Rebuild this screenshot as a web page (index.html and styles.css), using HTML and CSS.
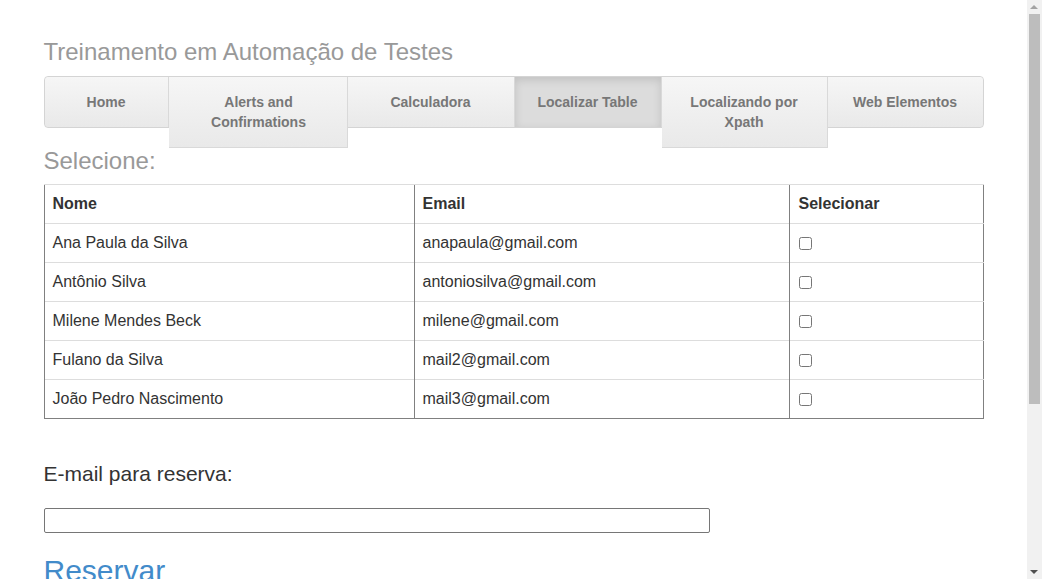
FILE: index.html
```html
<!DOCTYPE html>
<html lang="pt-BR">
<head>
<meta charset="utf-8">
<title>Treinamento em Automação de Testes</title>
<link rel="stylesheet" href="styles.css">
</head>
<body>
<div class="container">
  <h1 class="title">Treinamento em Automação de Testes</h1>
  <ul class="nav">
    <li class="nav-item w1">Home</li>
    <li class="nav-item w2">Alerts and Confirmations</li>
    <li class="nav-item w3">Calculadora</li>
    <li class="nav-item w4 active">Localizar Table</li>
    <li class="nav-item w5">Localizando por Xpath</li>
    <li class="nav-item w6 last">Web Elementos</li>
  </ul>
  <h2 class="subtitle">Selecione:</h2>
  <table class="grid">
    <colgroup>
      <col class="c1"><col class="c2"><col class="c3">
    </colgroup>
    <thead>
      <tr><th>Nome</th><th>Email</th><th>Selecionar</th></tr>
    </thead>
    <tbody>
      <tr><td>Ana Paula da Silva</td><td>anapaula@gmail.com</td><td><input type="checkbox" class="chk"></td></tr>
      <tr><td>Antônio Silva</td><td>antoniosilva@gmail.com</td><td><input type="checkbox" class="chk"></td></tr>
      <tr><td>Milene Mendes Beck</td><td>milene@gmail.com</td><td><input type="checkbox" class="chk"></td></tr>
      <tr><td>Fulano da Silva</td><td>mail2@gmail.com</td><td><input type="checkbox" class="chk"></td></tr>
      <tr><td>João Pedro Nascimento</td><td>mail3@gmail.com</td><td><input type="checkbox" class="chk"></td></tr>
    </tbody>
  </table>
  <p class="label">E-mail para reserva:</p>
  <input type="text" class="email">
  <a class="reservar" href="#">Reservar</a>
</div>
<div class="scrollbar" aria-hidden="true">
  <span class="arrow up"></span>
  <span class="thumb"></span>
  <span class="arrow down"></span>
</div>
</body>
</html>
```
FILE: styles.css
```css
html, body {
  margin: 0;
  padding: 0;
  background: #fff;
}
body {
  font-family: "Liberation Sans", Arial, sans-serif;
  font-size: 16px;
  color: #333;
  padding-right: 15px;
}
.container {
  width: 940px;
  margin: 0 auto;
  padding: 39px 0 240px;
}
.title {
  margin: 0;
  font-size: 24px;
  font-weight: normal;
  line-height: 26px;
  color: #999;
}
.nav {
  list-style: none;
  margin: 11px 0 0;
  padding: 0;
  height: 50px;
  display: grid;
  grid-template-columns: 124px 179px 167px 147px 166px 1fr;
  align-items: start;
  border: 1px solid #d4d4d4;
  border-radius: 4px;
  background: linear-gradient(#f7f7f7, #e8e8e8);
}
.nav-item {
  padding: 15px 10px;
  line-height: 20px;
  font-size: 14px;
  font-weight: bold;
  color: #777;
  text-align: center;
  background: linear-gradient(#f6f6f6, #e9e9e9);
  border-right: 1px solid #d9d9d9;
}
.nav-item.w1 { border-radius: 4px 0 0 4px; }
.nav-item.w2, .nav-item.w5 {
  border-bottom: 1px solid #d9d9d9;
}
.nav-item.w2 { padding-left: 31px; padding-right: 29px; }
.nav-item.w5 { padding-left: 20px; padding-right: 20px; }
.nav-item.last {
  border-right: 0;
  border-radius: 0 4px 4px 0;
}
.nav-item.active {
  background: #dcdcdc;
  box-shadow: inset 0 3px 8px rgba(0, 0, 0, 0.125);
}
.subtitle {
  margin: 20px 0 10px;
  font-size: 24px;
  font-weight: normal;
  line-height: 26px;
  color: #999;
}
.grid {
  width: 939px;
  border-collapse: collapse;
  table-layout: fixed;
  border-left: 1px solid #808080;
  border-right: 1px solid #808080;
  border-bottom: 1px solid #808080;
}
.c1 { width: 370px; }
.c2 { width: 375px; }
.c3 { width: 194px; }
.grid th, .grid td {
  padding: 8px;
  line-height: 22px;
  text-align: left;
  border-top: 1px solid #ddd;
  border-left: 1px solid #808080;
  vertical-align: top;
}
.grid th { font-weight: bold; }
.grid th:last-child { padding-left: 9px; }
.chk {
  margin: 5px 0 0 1px;
  width: 13px;
  height: 13px;
  vertical-align: top;
}
.label {
  margin: 43px 0 0;
  font-size: 21px;
  line-height: 24px;
  color: #333;
}
.email {
  display: block;
  margin: 22px 0 0;
  box-sizing: border-box;
  width: 666px;
  height: 25px;
  border: 1px solid #767676;
  border-radius: 2px;
  padding: 1px 2px;
}
.reservar {
  display: block;
  margin-top: 20px;
  font-size: 30px;
  line-height: 36px;
  color: #428bca;
  text-decoration: none;
}
.scrollbar {
  position: fixed;
  top: 0;
  right: 0;
  width: 15px;
  height: 100vh;
  background: #f1f1f1;
}
.thumb {
  position: absolute;
  left: 2px;
  top: 14px;
  width: 11px;
  height: 390px;
  background: #bdbdbd;
}
.arrow {
  position: absolute;
  left: 3px;
  width: 0;
  height: 0;
  border-left: 4px solid transparent;
  border-right: 4px solid transparent;
}
.arrow.up {
  top: 5px;
  border-bottom: 4px solid #a3a3a3;
}
.arrow.down {
  bottom: 5px;
  border-top: 4px solid #505050;
}
```
